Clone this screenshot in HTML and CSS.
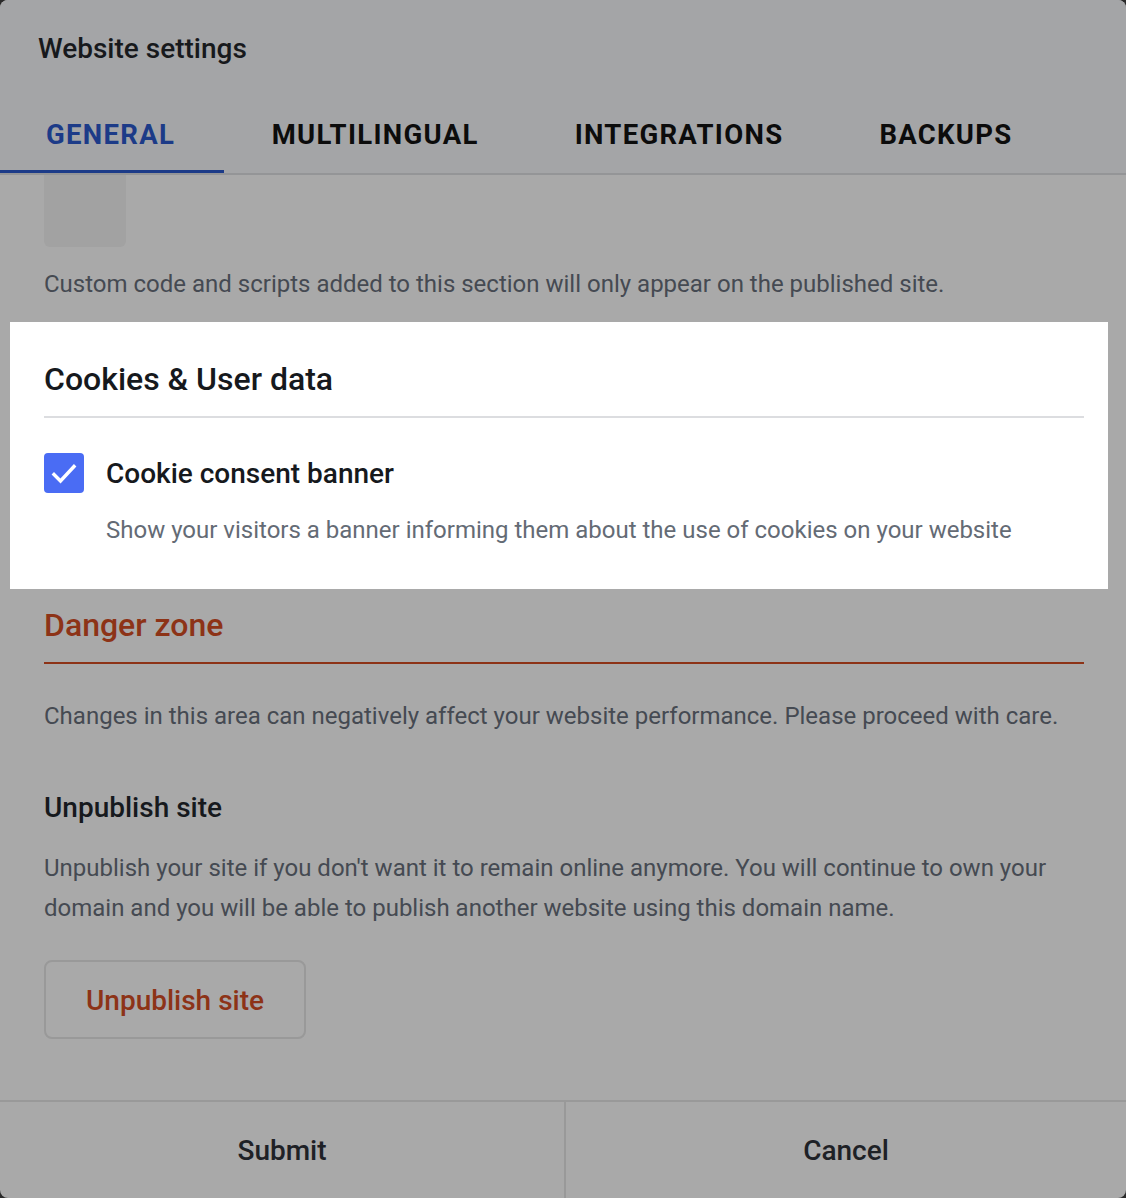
FILE: index.html
```html
<!DOCTYPE html>
<html lang="en">
<head>
<meta charset="utf-8">
<title>Website settings</title>
<link rel="stylesheet" href="styles.css">
</head>
<body>
<div class="modal">
  <header class="modal-header">
    <h1 class="modal-title">Website settings</h1>
  </header>
  <nav class="tabs">
    <a class="tab tab-active">GENERAL</a>
    <a class="tab">MULTILINGUAL</a>
    <a class="tab">INTEGRATIONS</a>
    <a class="tab">BACKUPS</a>
  </nav>
  <main class="content">
    <div class="editor-stub"></div>
    <p class="hint">Custom code and scripts added to this section will only appear on the published site.</p>

    <section class="cookies">
      <h2 class="cookies-title">Cookies &amp; User data</h2>
      <div class="check-row">
        <span class="checkbox">
          <svg width="40" height="40" viewBox="0 0 40 40" fill="none"><path d="M10 21.5l6.5 6.5 13.5-14.5" stroke="#fff" stroke-width="3.4" stroke-linecap="square"/></svg>
        </span>
        <span class="check-label">Cookie consent banner</span>
      </div>
      <p class="check-desc">Show your visitors a banner informing them about the use of cookies on your website</p>
    </section>

    <section class="danger">
      <h2 class="danger-title">Danger zone</h2>
      <p class="danger-text">Changes in this area can negatively affect your website performance. Please proceed with care.</p>
      <h3 class="sub-title">Unpublish site</h3>
      <p class="sub-text">Unpublish your site if you don't want it to remain online anymore. You will continue to own your domain and you will be able to publish another website using this domain name.</p>
      <button class="btn-outline">Unpublish site</button>
    </section>
  </main>
  <footer class="footer">
    <button class="footer-btn footer-btn-left">Submit</button>
    <button class="footer-btn footer-btn-right">Cancel</button>
  </footer>
</div>
</body>
</html>
```

FILE: styles.css
```css
* { box-sizing: border-box; }
html, body { margin: 0; padding: 0; }
body {
  background: #2a2a2a;
  font-family: Roboto, "Liberation Sans", sans-serif;
  width: 1126px;
  height: 1198px;
  overflow: hidden;
}
.modal {
  width: 1126px;
  height: 1198px;
  background: #a9a9a9;
  border-radius: 8px;
  overflow: hidden;
  display: flex;
  flex-direction: column;
}
.modal-header {
  background: #a4a5a7;
  padding: 33px 38px 0;
  height: 96px;
}
.modal-title {
  margin: 0;
  font-size: 28px;
  line-height: 32px;
  font-weight: 500;
  color: #17191c;
}
.tabs {
  background: #a4a5a7;
  display: flex;
  border-bottom: 2px solid #949597;
}
.tab {
  padding: 24px 48px 20px 48px;
  line-height: 30px;
  font-size: 27.5px;
  font-weight: 700;
  letter-spacing: 1.3px;
  color: #0c0c0c;
  border-bottom: 3px solid transparent;
}
.tab-active {
  padding-left: 46px;
  padding-right: 48.5px;
  color: #1c3b88;
  border-bottom-color: #1c3b88;
}
.content {
  flex: 1;
  padding: 0 42px 0 44px;
}
.editor-stub {
  width: 82px;
  height: 72px;
  background: #a2a2a2;
  border-radius: 0 0 6px 6px;
}
.hint {
  margin: 21px 0 0;
  font-size: 24px;
  line-height: 32px;
  color: #454a52;
}
.cookies {
  margin: 22px -24px 0 -34px;
  padding: 39px 24px 43px 34px;
  background: #ffffff;
}
.cookies-title {
  margin: 0;
  font-size: 32px;
  line-height: 36px;
  font-weight: 500;
  color: #16191d;
  padding-bottom: 19px;
  border-bottom: 2px solid #dcdde0;
}
.check-row {
  margin-top: 35px;
  display: flex;
  align-items: flex-start;
  gap: 22px;
}
.checkbox {
  width: 40px;
  height: 40px;
  border-radius: 4px;
  background: #4a6cf4;
  display: flex;
}
.check-label {
  font-size: 28px;
  font-weight: 500;
  line-height: 42px;
  color: #16191d;
}
.check-desc {
  margin: 19px 0 0 62px;
  font-size: 24px;
  line-height: 32px;
  color: #646b75;
}
.danger-title {
  margin: 18px 0 0;
  font-size: 32px;
  line-height: 36px;
  font-weight: 500;
  color: #8d3317;
  padding-bottom: 19px;
  border-bottom: 2px solid #8d3317;
}
.danger-text {
  margin: 36px 0 0;
  font-size: 24px;
  line-height: 32px;
  color: #454a52;
}
.sub-title {
  margin: 59px 0 0;
  font-size: 28px;
  line-height: 34px;
  font-weight: 500;
  color: #16191d;
}
.sub-text {
  margin: 23px 0 0;
  font-size: 24px;
  line-height: 40px;
  color: #454a52;
}
.btn-outline {
  margin-top: 32px;
  width: 262px;
  height: 79px;
  background: transparent;
  border: 2px solid #999999;
  border-radius: 8px;
  font-family: inherit;
  font-size: 28px;
  font-weight: 500;
  color: #8d3317;
  padding: 2px 0 0;
}
.footer {
  display: flex;
  height: 98px;
  border-top: 2px solid #999999;
}
.footer-btn {
  background: transparent;
  border: 0;
  font-family: inherit;
  font-size: 28px;
  font-weight: 500;
  color: #1e2126;
  padding: 0;
}
.footer-btn-left {
  flex: 0 0 564px;
}
.footer-btn-right {
  flex: 1;
  border-left: 2px solid #999999;
}
```
